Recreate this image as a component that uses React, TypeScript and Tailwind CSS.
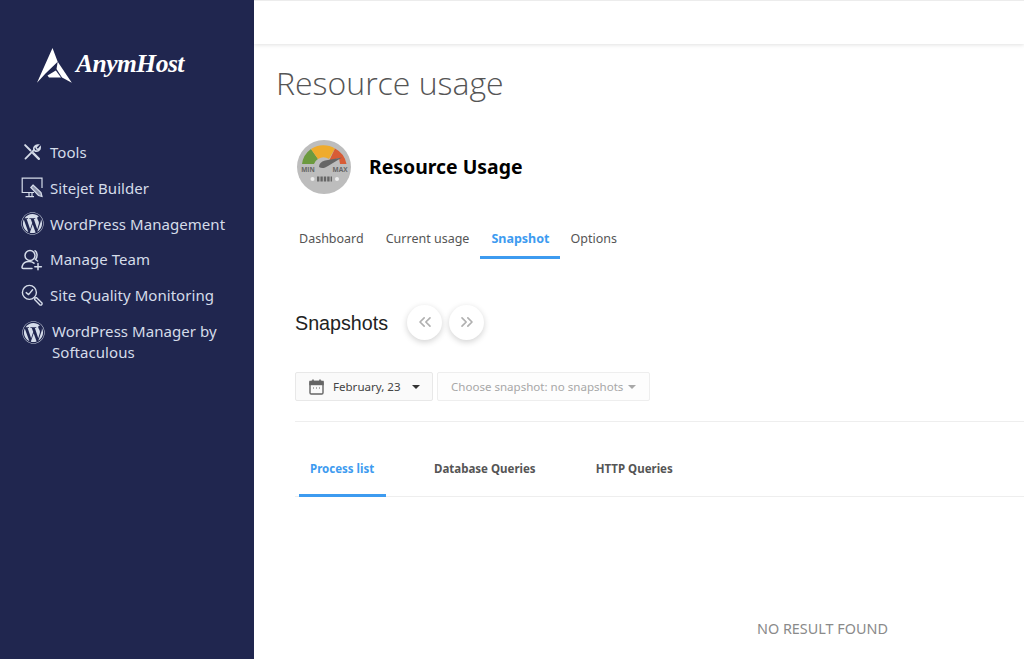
import { FaWordpress } from "react-icons/fa";
import { ChevronsLeft, ChevronsRight } from "lucide-react";

const SANS = "font-['Noto_Sans',sans-serif]";

function ToolsIcon() {
  return (
    <svg width="18" height="18" viewBox="0 0 22 22" fill="none" stroke="currentColor" strokeWidth="1.9" strokeLinecap="round">
      <path d="M3 19 L13.6 8.4" strokeWidth="2.2" />
      <path d="M13.4 8.6 C12.4 5.4 14.8 2 18.6 2.4 L15.8 5.2 L16.8 7.2 L18.8 8 L21 5.2 C21.4 8.6 17.6 11 14.4 9.4" />
      <path d="M2.6 2.6 L9.2 9.2" strokeWidth="2.4" />
      <path d="M12.4 12.4 L19.4 19.4" strokeWidth="2.8" />
    </svg>
  );
}

function SitejetIcon() {
  return (
    <svg width="22" height="22" viewBox="0 0 22 22" fill="none" stroke="currentColor" strokeWidth="1.2">
      <path d="M13 15.5 H1.2 V1.2 H21 V11" />
      <path d="M8 15.5 V19 M11 15.5 V19 M4.5 19.6 H13" />
      <path d="M12 8 L20 15.5 L21 19.5 L17.5 18.5 L9.8 10.5 Z" fill="currentColor" fillOpacity="0.6" />
    </svg>
  );
}

function TeamIcon() {
  return (
    <svg width="22" height="22" viewBox="0 0 22 22" fill="none" stroke="currentColor" strokeWidth="1.5" strokeLinecap="round">
      <circle cx="9" cy="6.5" r="5" />
      <path d="M14 1.8 C16.5 3 16.8 8 14.5 10.5 L16.5 12" />
      <path d="M11 19.6 H2.4 C1 19.6 0.8 18.6 1.2 17.2 C2 14.4 4.6 12.6 8 12.6 C10 12.6 11.6 13.2 13 14.2" />
      <path d="M17 14.5 V20.8 M13.8 17.7 H20.4" />
    </svg>
  );
}

function QualityIcon() {
  return (
    <svg width="22" height="22" viewBox="0 0 22 22" fill="none" stroke="currentColor" strokeWidth="1.4" strokeLinecap="round" strokeLinejoin="round">
      <circle cx="8.4" cy="8.4" r="7" />
      <path d="M5.2 8.6 L7.6 10.6 L11.6 5.8" />
      <path d="M14 14 L15.4 13.6 L21 19 C21.4 20.6 20.4 21.4 19 21 L13.6 15.4 Z" />
    </svg>
  );
}

function WpIcon() {
  return <FaWordpress size={23} className="shrink-0" />;
}

const MENU = [
  { label: "Tools", icon: <ToolsIcon /> },
  { label: "Sitejet Builder", icon: <SitejetIcon /> },
  { label: "WordPress Management", icon: <WpIcon /> },
  { label: "Manage Team", icon: <TeamIcon /> },
  { label: "Site Quality Monitoring", icon: <QualityIcon /> },
];

function Logo() {
  return (
    <div className="flex items-center h-[36px] ml-[37px] mt-[47px] text-white">
      <svg width="35" height="35" viewBox="0 0 35 35" className="shrink-0" fill="#fff">
        <path d="M15.5 0 L20.7 13.7 L8.5 25.5 L0 34.8 Z" />
        <path d="M20.7 13.7 L34.8 34.8 L25 29.5 L19.5 21 Z" />
        <path d="M10.5 27.5 L18.8 22.5 L24 29.5 L12 29.5 Z" />
      </svg>
      <span className="ml-[4px] -mt-[3px] font-['Liberation_Serif',serif] italic font-bold text-[25.5px] leading-none tracking-[-0.5px] whitespace-nowrap">
        AnymHost
      </span>
    </div>
  );
}

function Sidebar() {
  return (
    <aside className={`w-[254px] shrink-0 bg-[#20264f] text-[#d5dce9] ${SANS}`}>
      <Logo />
      <nav className="mt-[51.5px] pl-[21px] flex flex-col">
        {MENU.map((m) => (
          <div key={m.label} className="flex items-center h-[35.75px]">
            <span className="w-[22px] h-[22px] flex items-center justify-center">{m.icon}</span>
            <span className="ml-[7px] text-[15px] tracking-[0.05px] whitespace-nowrap">{m.label}</span>
          </div>
        ))}
        <div className="flex items-start pt-[7.5px] pl-[1px]">
          <span className="w-[22px] h-[22px] mt-[1px] flex items-center justify-center"><WpIcon /></span>
          <span className="ml-[8px] text-[15px] leading-[21px] tracking-[0.05px]">
            WordPress Manager by
            <br />
            Softaculous
          </span>
        </div>
      </nav>
    </aside>
  );
}

function GaugeIcon() {
  return (
    <svg width="54" height="54" viewBox="0 0 54 54" className="shrink-0">
      <circle cx="27" cy="27" r="27" fill="#bdbdbd" />
      <path d="M5 24 A22 22 0 0 1 14 9 L21 19 A9 9 0 0 0 17 24 Z" fill="#6c9a3f" />
      <path d="M14 9 A22 22 0 0 1 38 8.5 L32 19 A10 10 0 0 0 21 19 Z" fill="#efab2c" />
      <path d="M38 8.5 A22 22 0 0 1 49.5 24 L43 24 L42 18 L32 21 Z" fill="#d85c36" />
      <path d="M45 17.5 L28 20.5 C24 21.5 22 24 22 27 C25 29 28 28 31 26 Z" fill="#666" />
      <circle cx="15.5" cy="39" r="2" fill="#eee" />
      <circle cx="40" cy="39" r="2" fill="#eee" />
      <path d="M20 36.5 h2.4 v5 h-2.4 z M23.4 36.5 h2.4 v5 h-2.4 z M26.8 36.5 h2.4 v5 h-2.4 z M30.2 36.5 h2.4 v5 h-2.4 z M33.6 36.5 h1.4 v5 h-1.4 z" fill="#666" />
      <text x="11" y="31.5" fontSize="6.5" fontWeight="700" fill="#666" textAnchor="middle" fontFamily="'Open Sans',sans-serif">MIN</text>
      <text x="43" y="31.5" fontSize="6.5" fontWeight="700" fill="#666" textAnchor="middle" fontFamily="'Open Sans',sans-serif">MAX</text>
    </svg>
  );
}

function CalendarIcon() {
  return (
    <svg width="15" height="16" viewBox="0 0 15 16" className="shrink-0" fill="none" stroke="#666" strokeWidth="1.4">
      <rect x="1" y="2.5" width="13" height="12.5" rx="1.2" />
      <rect x="1" y="2.5" width="13" height="3" fill="#666" />
      <path d="M4 0.5 V3 M11 0.5 V3" strokeWidth="1.6" />
      <path d="M4 9 h1 M7 9 h1 M10 9 h1" strokeWidth="1" />
    </svg>
  );
}

function Caret({ color }: { color: string }) {
  return <span className={`w-0 h-0 border-x-[4px] border-x-transparent border-t-[4px] ${color}`} />;
}

function RoundBtn({ children }: { children: React.ReactNode }) {
  return (
    <button className="w-[35px] h-[35px] rounded-full bg-white flex items-center justify-center text-[#b0b0b0] shadow-[0_2px_6px_rgba(0,0,0,0.18)]">
      {children}
    </button>
  );
}

function Main() {
  return (
    <main className={`flex-1 min-w-0 bg-white ${SANS}`}>
      <div className="h-[44px] border-t border-[#ececec] bg-white shadow-[0_1px_4px_rgba(0,0,0,0.12)]" />
      <h1 className="ml-[22px] mt-[16px] h-[46px] font-['Open_Sans',sans-serif] text-[32px] leading-[46px] font-light text-[#555]">Resource usage</h1>

      <div className="ml-[41px]">
        <div className="mt-[34px] ml-[2px] flex items-center h-[54px]">
          <GaugeIcon />
          <span className="ml-[18px] text-[19.4px] font-bold text-black">Resource Usage</span>
        </div>

        <div className="mt-[25px] flex h-[40px] text-[12.5px] text-[#555]">
          <div className="px-[4px] pt-[11px]">Dashboard</div>
          <div className="ml-[14px] px-[4px] pt-[11px]">Current usage</div>
          <div className="ml-[7px] px-[11px] pt-[11px] font-bold text-[#3d9bf0] border-b-[3px] border-[#3d9bf0]">Snapshot</div>
          <div className="ml-[6px] px-[4px] pt-[11px]">Options</div>
        </div>

        <div className="mt-[46px] flex items-center h-[36px]">
          <h2 className="w-[92px] font-['Liberation_Sans',sans-serif] text-[19.7px] text-[#222] translate-y-px whitespace-nowrap">Snapshots</h2>
          <div className="ml-[20px] flex gap-[7px] -translate-y-px">
            <RoundBtn><ChevronsLeft size={20} strokeWidth={2} /></RoundBtn>
            <RoundBtn><ChevronsRight size={20} strokeWidth={2} /></RoundBtn>
          </div>
        </div>

        <div className="mt-[31px] flex gap-[4px] h-[29px] text-[11.55px]">
          <div className="w-[138px] flex items-center pl-[13px] bg-[#fafafa] border border-[#e8e8e8] rounded-[2px] text-[#444]">
            <CalendarIcon />
            <span className="ml-[9px] whitespace-nowrap">February, 23</span>
            <span className="ml-[11px] flex"><Caret color="border-t-[#333]" /></span>
          </div>
          <div className="w-[213px] flex items-center pl-[13px] bg-[#fdfdfd] border border-[#eeeeee] rounded-[2px] text-[#a8a8a8]">
            <span className="whitespace-nowrap">Choose snapshot: no snapshots</span>
            <span className="ml-[5px] flex"><Caret color="border-t-[#a8a8a8]" /></span>
          </div>
        </div>

        <div className="mt-[20px] border-t border-[#eeeeee]" />

        <div className="mt-[28px] pl-[4px] flex h-[47px] border-b border-[#eeeeee] text-[11.5px] font-bold text-[#555]">
          <div className="w-[87px] pl-[11px] pt-[10px] text-[#3d9bf0] border-b-[3px] border-[#3d9bf0] h-[47px]">Process list</div>
          <div className="ml-[48px] pt-[10px]">Database Queries</div>
          <div className="ml-[60px] pt-[10px]">HTTP Queries</div>
        </div>

        <p className="mt-[121px] ml-[462px] text-[14.4px] text-[#8a8a8a] whitespace-nowrap">NO RESULT FOUND</p>
      </div>
    </main>
  );
}

export default function App() {
  return (
    <div className="flex w-[1024px] h-[659px] overflow-hidden">
      <Sidebar />
      <Main />
    </div>
  );
}
